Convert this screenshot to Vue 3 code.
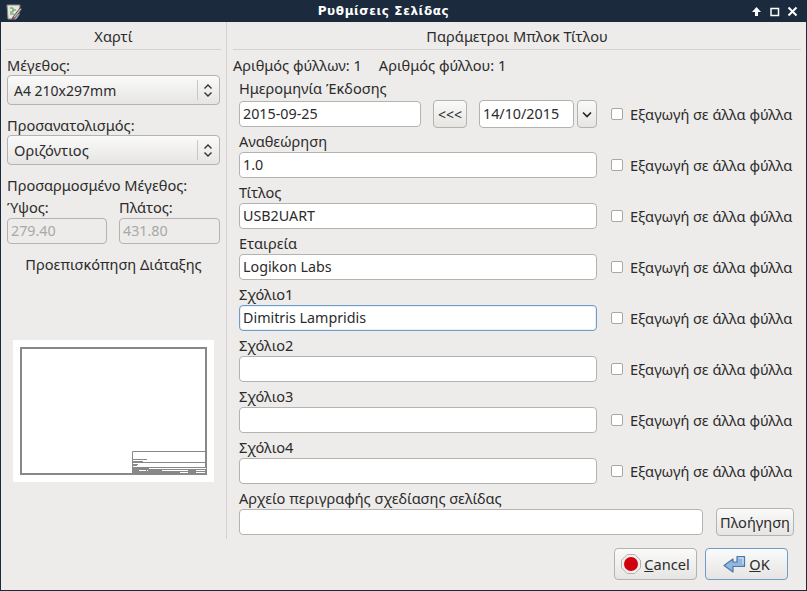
<template>
  <div class="window">
    <header class="titlebar">
      <svg class="app-icon" width="18" height="18" viewBox="0 0 18 18">
        <path d="M2 2h13l-1 10-3 4H3z" fill="#e8e6df" stroke="#8d8b84" stroke-width="1" />
        <path d="M5 5h3v4H5M8 7h3M5 11h4" fill="none" stroke="#4c9a4c" stroke-width="1" />
        <path d="M8 14l7-9 2 1-7 9-3 1z" fill="#b9b7ae" stroke="#3d3d3d" stroke-width="0.8" />
        <path d="M7 16l1-2 2 1z" fill="#c02ab0" />
      </svg>
      <span class="title">Ρυθμίσεις Σελίδας</span>
      <div class="win-buttons">
        <svg width="11" height="11" viewBox="0 0 11 11"><path d="M5.5 1L10 6H7v4H4V6H1z" fill="#fff" /></svg>
        <svg width="11" height="11" viewBox="0 0 11 11"><path d="M2 2.5h7.5v7H2z" fill="none" stroke="#fff" stroke-width="1.5" /></svg>
        <svg width="11" height="11" viewBox="0 0 11 11"><path d="M1.5 1.5l8 8M9.5 1.5l-8 8" fill="none" stroke="#fff" stroke-width="2" /></svg>
      </div>
    </header>

    <main class="content">
      <div class="columns">
        <section class="paper">
          <h2 class="group-title">Χαρτί</h2>
          <label class="lbl first">Μέγεθος:</label>
          <div class="combo">
            <span class="latin">A4 210x297mm</span>
            <i class="combo-sep"></i>
            <svg width="10" height="15" viewBox="0 0 10 15"><path d="M1.5 5.5L5 2l3.500 3.500M1.500 9.500L5 13l3.500-3.500" fill="none" stroke="#333" stroke-width="1.400" /></svg>
          </div>
          <label class="lbl orient">Προσανατολισμός:</label>
          <div class="combo">
            <span>Οριζόντιος</span>
            <i class="combo-sep"></i>
            <svg width="10" height="15" viewBox="0 0 10 15"><path d="M1.5 5.5L5 2l3.500 3.500M1.500 9.500L5 13l3.500-3.500" fill="none" stroke="#333" stroke-width="1.400" /></svg>
          </div>
          <div class="lbl custom">Προσαρμοσμένο Μέγεθος:</div>
          <div class="custom-size">
            <div>
              <div class="lbl">Ύψος:</div>
              <div class="input disabled">279.40</div>
            </div>
            <div>
              <div class="lbl">Πλάτος:</div>
              <div class="input disabled">431.80</div>
            </div>
          </div>
          <div class="preview-title">Προεπισκόπηση Διάταξης</div>
          <div class="preview">
            <div class="sheet">
              <svg class="stamp" width="74" height="22" viewBox="0 0 74 22">
                <path d="M.5 22V.5H74" fill="none" stroke="#888" stroke-width="1" />
                <path d="M1 8h14v1H1zM1 10h10v1H1zM0 11h74v1H0zM1 13h5v1H1zM1 14h4v1H1zM0 16h74v1H0z" fill="#888" />
                <path d="M0 17h74v5H0z" fill="#888" />
                <path d="M17 17h57v1H17zM7 19h7v1H7zM15 19h1v1h-1zM30 19h26v1H30zM64 19h9v1h-9zM48 21h8v1h-8zM64 21h9v1h-9z" fill="#fff" />
              </svg>
            </div>
          </div>
        </section>

        <section class="titleblock">
          <h2 class="group-title">Παράμετροι Μπλοκ Τίτλου</h2>
          <div class="counts">
            <span>Αριθμός φύλλων: 1</span>
            <span>Αριθμός φύλλου: 1</span>
          </div>
          <div class="field date-field">
            <div class="lbl">Ημερομηνία Έκδοσης</div>
            <div class="row">
              <div class="date-group">
                <div class="input grow">2015-09-25</div>
                <button class="btn small">&lt;&lt;&lt;</button>
                <div class="date-picker">
                  <div class="input date">14/10/2015</div>
                  <div class="drop">
                    <svg width="10" height="7" viewBox="0 0 10 7"><path d="M1 1.500l4 4 4-4" fill="none" stroke="#222" stroke-width="1.600" /></svg>
                  </div>
                </div>
              </div>
              <label class="export"><i class="check"></i>Εξαγωγή σε άλλα φύλλα</label>
            </div>
          </div>
          <div v-for="f in fields" :key="f.label" class="field">
            <div class="lbl">{{ f.label }}</div>
            <div class="row">
              <div class="input grow" :class="{ focused: f.focused }">{{ f.value }}</div>
              <label class="export"><i class="check"></i>Εξαγωγή σε άλλα φύλλα</label>
            </div>
          </div>
          <div class="field">
            <div class="lbl">Αρχείο περιγραφής σχεδίασης σελίδας</div>
            <div class="row file-row">
              <div class="input grow"></div>
              <button class="btn browse">Πλοήγηση</button>
            </div>
          </div>
        </section>
      </div>

      <footer class="actions">
        <button class="btn action">
          <svg width="20" height="20" viewBox="0 0 20 20">
            <path d="M6.200 .5h7.600l5.700 5.700v7.600l-5.700 5.700H6.200L.5 13.800V6.200z" fill="#f0efed" stroke="#b3b1ad" />
            <circle cx="10" cy="10" r="7" fill="#d0000f" />
          </svg>
          <span><u>C</u>ancel</span>
        </button>
        <button class="btn action default">
          <svg width="23" height="19" viewBox="0 0 23 19">
            <path d="M14 1.500h7.500v10H10V17L1 10.500 10 4v3h4z" fill="#92b7de" stroke="#4a78ab" stroke-width="1.200" stroke-linejoin="round" />
            <path d="M15.500 3h4.500v6" fill="none" stroke="#d6e5f4" stroke-width="1.200" />
          </svg>
          <span><u>O</u>K</span>
        </button>
      </footer>
    </main>
  </div>
</template>

<script setup>
const fields = [
  { label: "Αναθεώρηση", value: "1.0" },
  { label: "Τίτλος", value: "USB2UART" },
  { label: "Εταιρεία", value: "Logikon Labs" },
  { label: "Σχόλιο1", value: "Dimitris Lampridis", focused: true },
  { label: "Σχόλιο2", value: "" },
  { label: "Σχόλιο3", value: "" },
  { label: "Σχόλιο4", value: "" },
];
</script>

<style>
html,
body {
  margin: 0;
  background: #1b2a3d;
}
</style>

<style scoped>
* {
  box-sizing: border-box;
}

.window {
  width: 807px;
  height: 591px;
  display: flex;
  flex-direction: column;
  font-family: "Noto Sans", sans-serif;
  font-size: 14.6px;
  color: #2b2b2b;
  background: #1b2a3d;
  border-radius: 5px 5px 0 0;
  overflow: hidden;
}

.titlebar {
  height: 22px;
  flex: none;
  position: relative;
  display: flex;
  align-items: center;
  justify-content: center;
  padding-right: 40px;
  color: #fff;
}

.app-icon {
  position: absolute;
  left: 5px;
  top: 3px;
}

.title {
  font-family: "DejaVu Sans", sans-serif;
  font-weight: bold;
  font-size: 12px;
  letter-spacing: 0.6px;
}

.win-buttons {
  position: absolute;
  right: 9px;
  top: 6px;
  display: flex;
  gap: 7px;
}

.content {
  flex: 1;
  margin: 0 1px 1px;
  background: #edecea;
  padding: 0 5px 0;
  display: flex;
  flex-direction: column;
}

.columns {
  display: flex;
  height: 517px;
}

.paper {
  width: 215px;
  flex: none;
}

.titleblock {
  margin-left: 5px;
  padding-left: 6px;
  border-left: 1px solid #d2d1cf;
  flex: 1;
}

.group-title {
  margin: 0;
  height: 28px;
  line-height: 29px;
  font-size: 14.6px;
  font-weight: normal;
  text-align: center;
  border-bottom: 1px solid #d2d1cf;
}

.lbl {
  display: block;
  height: 25px;
  line-height: 29px;
  padding-left: 1px;
  white-space: nowrap;
}

.lbl.first {
  line-height: 31px;
}

.latin {
  font-size: 14px;
}

.combo {
  height: 30px;
  margin: 0 0 0 1px;
  width: 213px;
  display: flex;
  align-items: center;
  padding: 0 6px 0 6px;
  border: 1px solid #b5b3b0;
  border-radius: 4px;
  background: linear-gradient(#fafafa, #e6e5e3);
}

.combo span {
  flex: 1;
}

.combo-sep {
  width: 1px;
  height: 20px;
  margin-right: 5px;
  background: #c9c8c5;
}

.orient {
  margin-top: 8px;
  height: 22px;
  line-height: 25px;
}

.custom {
  margin-top: 8px;
  height: 25px;
  line-height: 25px;
}

.custom-size {
  display: flex;
  gap: 12px;
  margin-left: 1px;
}

.custom-size > div {
  width: 100px;
}

.custom-size > div:last-child {
  width: 101px;
}

.custom-size .lbl {
  height: 20px;
  line-height: 18px;
  padding-left: 0;
}

.input {
  height: 26px;
  line-height: 24px;
  padding: 0 3px;
  font-size: 14.3px;
  background: #fff;
  border: 1px solid #b5b3b0;
  border-radius: 4px;
  white-space: nowrap;
}

.input.disabled {
  background: #edecea;
  color: #a9a8a6;
}

.input.focused {
  border-color: #6f9cc6;
  box-shadow: inset 0 0 0 1px rgba(111, 156, 198, 0.15);
}

.preview-title {
  margin-top: 11px;
  height: 20px;
  line-height: 18px;
  text-align: center;
}

.preview {
  margin: 65px 0 0 7px;
  width: 201px;
  height: 142px;
  padding: 7px;
  background: #fff;
}

.sheet {
  position: relative;
  width: 187px;
  height: 128px;
  border: 2px solid #888;
}

.stamp {
  position: absolute;
  right: -1px;
  bottom: 0;
}

.counts {
  display: flex;
  gap: 17px;
  height: 26px;
  line-height: 31px;
  white-space: nowrap;
}

.field {
  margin-left: 6px;
  height: 51px;
}

.field .lbl {
  height: 25px;
  line-height: 29px;
  padding-left: 0;
}

.date-field .lbl {
  line-height: 25px;
}

.row {
  display: flex;
  align-items: center;
  height: 26px;
}

.grow {
  flex: 1;
}

.date-group {
  display: flex;
  align-items: center;
  width: 358px;
  flex: none;
}

.date-picker {
  display: flex;
  gap: 3px;
  margin-left: 12px;
}

.input.date {
  width: 95px;
  height: 28px;
  line-height: 26px;
}

.drop {
  width: 20px;
  height: 28px;
  display: flex;
  align-items: center;
  justify-content: center;
  border: 1px solid #b5b3b0;
  border-radius: 4px;
  background: linear-gradient(#fafafa, #e6e5e3);
}

.row > .grow {
  flex: 0 0 358px;
}

.file-row > .grow {
  flex: 0 0 464px;
}

.export {
  display: flex;
  align-items: center;
  margin-left: 14px;
  white-space: nowrap;
}

.check {
  width: 12px;
  height: 12px;
  margin-right: 7px;
  background: #fff;
  border: 1px solid #a9a7a4;
  border-radius: 2px;
}

.btn {
  font: inherit;
  color: inherit;
  padding: 0;
  height: 28px;
  border: 1px solid #b5b3b0;
  border-radius: 4px;
  background: linear-gradient(#fafafa, #e6e5e3);
  flex: none;
}

.btn.small {
  width: 34px;
  margin-left: 12px;
  font-size: 14px;
}

.btn.browse {
  width: 78px;
  margin-left: 13px;
}

.actions {
  display: flex;
  justify-content: flex-end;
  gap: 8px;
  padding: 9px 13px 0 0;
}

.action {
  width: 83px;
  height: 32px;
  display: flex;
  align-items: center;
  justify-content: center;
  gap: 3px;
}

.action.default {
  border-color: #6f9cc6;
}
</style>
